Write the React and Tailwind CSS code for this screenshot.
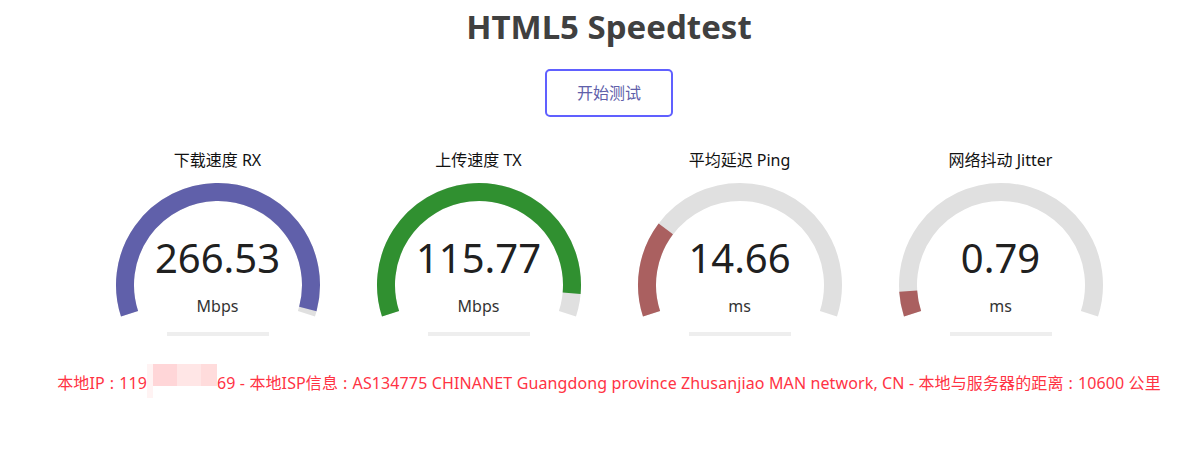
const gauges = [
  { name: "下载速度 RX", value: "266.53", unit: "Mbps", amount: 0.986, color: "#6060AA" },
  { name: "上传速度 TX", value: "115.77", unit: "Mbps", amount: 0.94, color: "#309030" },
  { name: "平均延迟 Ping", value: "14.66", unit: "ms", amount: 0.255, color: "#AA6060" },
  { name: "网络抖动 Jitter", value: "0.79", unit: "ms", amount: 0.066, color: "#AA6060" },
];

// arc geometry, same as the canvas meter: -1.1π .. 0.1π
const CX = 128;
const CY = 135;
const R = 93;
const START = -198;
const SPAN = 216;

function point(deg) {
  const rad = (deg * Math.PI) / 180;
  return [CX + R * Math.cos(rad), CY + R * Math.sin(rad)];
}

function arcPath(amount) {
  if (amount <= 0) return "";
  const [x1, y1] = point(START);
  const [x2, y2] = point(START + SPAN * amount);
  const large = SPAN * amount > 180 ? 1 : 0;
  return `M ${x1} ${y1} A ${R} ${R} 0 ${large} 1 ${x2} ${y2}`;
}

function Meter({ name, value, unit, amount, color }) {
  return (
    <div className="relative w-[256px] h-[190px]">
      <svg width="256" height="190" viewBox="0 0 256 190" className="block">
        <path d={arcPath(1)} fill="none" stroke="#E0E0E0" strokeWidth="18" />
        <path d={arcPath(amount)} fill="none" stroke={color} strokeWidth="18" />
        <rect x="77" y="182" width="102" height="4" fill="#EEEEEE" />
      </svg>
      <div className="absolute inset-x-0 top-0 text-base leading-5 text-[#111]">{name}</div>
      <div className="absolute inset-x-0 top-[84px] text-[40px] leading-[48px] text-[#202020]">
        {value}
      </div>
      <div className="absolute inset-x-0 top-[146px] text-base leading-5 text-[#333]">{unit}</div>
    </div>
  );
}

function Colon() {
  return <span className="px-[5px]">:</span>;
}

export default function App() {
  return (
    <div className="min-h-[450px] bg-white pl-4 text-center font-['Noto_Sans','Noto_Sans_CJK_SC',sans-serif]">
      <h1 className="pt-[9px] text-[33px] leading-[36px] font-bold text-[#404040]">HTML5 Speedtest</h1>

      <button className="mt-6 w-[128px] h-[48px] rounded-[5px] border-[2.4px] border-[#6060FF] text-base text-[#6060AA]">
        开始测试
      </button>

      <div className="mt-[33px] flex justify-center gap-[5px]">
        {gauges.map((g) => (
          <Meter key={g.name} {...g} />
        ))}
      </div>

      <div className="mt-[33px] text-base leading-5 tracking-[0.12px] text-[#ff3344] whitespace-nowrap">
        本地IP<Colon />119
        <span className="relative -top-[9px] inline-flex h-[34px] items-start align-top">
          <span className="w-[6px] h-[34px] bg-[#fff3f3]" />
          <span className="w-[24px] h-[22px] bg-[#ffd6d8]" />
          <span className="w-[24px] h-[22px] bg-[#ffe6e6]" />
          <span className="w-[16px] h-[22px] bg-[#ffdcdc]" />
        </span>
        69 - 本地ISP信息<Colon />AS134775 CHINANET Guangdong province Zhusanjiao MAN network, CN - 本地与服务器的距离<Colon />10600 公里
      </div>
    </div>
  );
}
